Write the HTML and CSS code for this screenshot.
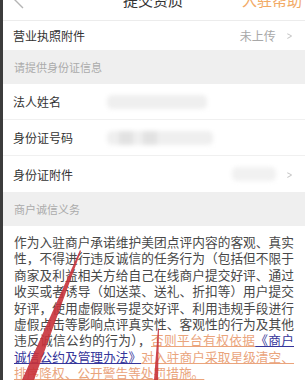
FILE: index.html
```html
<!DOCTYPE html>
<html lang="zh-CN">
<head>
  <meta charset="UTF-8">
  <title>提交资质</title>
  <link rel="stylesheet" href="styles.css">
</head>
<body>
  <div class="screen">
    <div class="topbar">
      <svg class="back" width="12" height="12" viewBox="0 0 12 12">
        <polyline points="9,-8 1,0 9,8" fill="none" stroke="#b5b5b5" stroke-width="1.4"/>
      </svg>
      <span class="title">提交资质</span>
      <span class="help">入驻帮助</span>
    </div>

    <div class="row first">
      <span class="label">营业执照附件</span>
      <span class="value">未上传</span>
      <span class="arrow">&gt;</span>
    </div>

    <div class="section">请提供身份证信息</div>
    <div class="row">
      <span class="label">法人姓名</span>
      <span class="blur name"></span>
    </div>
    <div class="row">
      <span class="label">身份证号码</span>
      <span class="blur idno">
        <i></i><i></i>
      </span>
    </div>
    <div class="row last">
      <span class="label">身份证附件</span>
      <span class="blur pic"></span>
      <span class="arrow">&gt;</span>
    </div>

    <div class="section">商户诚信义务</div>
    <p class="duty">作为入驻商户承诺维护美团点评内容的客观、真实性，不得进行违反诚信的任务行为（包括但不限于商家及利益相关方给自己在线商户提交好评、通过收买或者诱导（如送菜、送礼、折扣等）用户提交好评，使用虚假账号提交好评、利用违规手段进行虚假点击等影响点评真实性、客观性的行为及其他违反诚信公约的行为），<a class="warn">否则平台有权依据</a><a class="rule">《商户诚信公约及管理办法》</a><a class="warn">对入驻商户采取星级清空、排序降权、公开警告等处罚措施。</a></p>

    <svg class="marks" width="305" height="380" viewBox="0 0 305 380">
      <polygon points="80,250 81,251 34,380 22,380" fill="#c8323a" opacity="0.9"/>
      <polygon points="158,328 159,329 158,380 154,380" fill="#c8323a" opacity="0.9"/>
    </svg>
  </div>
</body>
</html>
```

FILE: styles.css
```css
* {
  box-sizing: border-box;
  margin: 0;
  padding: 0;
}
body {
  width: 305px;
  height: 380px;
  overflow: hidden;
  background: #fff;
  font-family: "Noto Sans CJK SC", "Noto Sans", sans-serif;
}
.screen {
  position: relative;
  height: 380px;
  border-left: 3px solid #3c3c3c;
  background: #fff;
}
.topbar {
  height: 21px;
  display: flex;
  align-items: flex-start;
  border-bottom: 1px solid #ececec;
  overflow: hidden;
}
.back {
  margin-left: 11px;
  flex: none;
}
.title {
  flex: 1;
  text-align: center;
  margin-top: -9px;
  margin-left: 38px;
  font-size: 15px;
  line-height: 18px;
  color: #333;
}
.help {
  margin-top: -9px;
  margin-right: 3px;
  font-size: 15px;
  line-height: 18px;
  color: #f2aa66;
}
.row {
  height: 36px;
  display: flex;
  align-items: center;
  padding: 0 12px 0 10px;
  border-bottom: 1px solid #f0f0f0;
  background: #fff;
}
.row.first {
  height: 29px;
  border-bottom: none;
}
.row.last {
  border-bottom: none;
}
.label {
  width: 94px;
  flex: none;
  font-size: 12px;
  color: #333;
}
.value {
  margin-left: auto;
  font-size: 12px;
  color: #a8a8a8;
}
.arrow {
  margin-left: 10px;
  font-size: 13px;
  color: #c4c4c4;
  transform: scaleX(0.7);
}
.blur {
  height: 14px;
  border-radius: 5px;
  background: #efefef;
  filter: blur(2px);
}
.name {
  width: 100px;
}
.idno {
  width: 106px;
  display: flex;
  gap: 10px;
  padding-left: 12px;
}
.idno i {
  width: 14px;
  height: 14px;
  background: #e2e2e2;
}
.pic {
  width: 44px;
  margin-left: auto;
  background: #f1f1f1;
}
.section {
  height: 34px;
  display: flex;
  align-items: center;
  padding-left: 11px;
  background: #efefef;
  font-size: 11px;
  color: #ababab;
}
.duty {
  width: 291px;
  padding: 8px 0 0 11px;
  font-size: 12.7px;
  line-height: 16.4px;
  color: #484848;
  text-align: justify;
}
.duty .warn {
  color: #eaa47c;
  text-decoration: underline;
}
.duty .rule {
  color: #35359a;
  text-decoration: underline;
}
.marks {
  position: absolute;
  left: -3px;
  top: 0;
}
```
